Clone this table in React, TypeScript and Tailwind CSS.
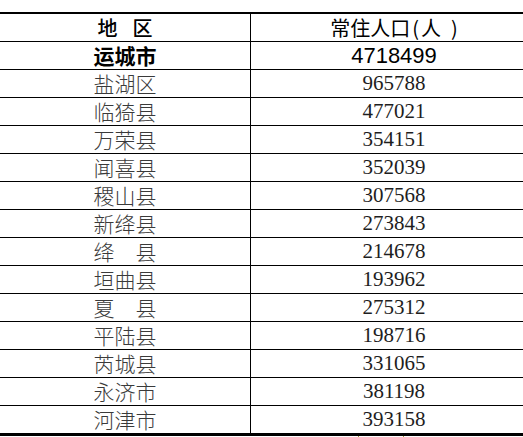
const rows: [string, string][] = [
  ['盐湖区', '965788'],
  ['临猗县', '477021'],
  ['万荣县', '354151'],
  ['闻喜县', '352039'],
  ['稷山县', '307568'],
  ['新绛县', '273843'],
  ['绛 县', '214678'],
  ['垣曲县', '193962'],
  ['夏 县', '275312'],
  ['平陆县', '198716'],
  ['芮城县', '331065'],
  ['永济市', '381198'],
  ['河津市', '393158'],
];

const cjk = "font-['Noto_Sans_CJK_SC',sans-serif]";

function Name({ text }: { text: string }) {
  // names with a space are spaced out to the width of three characters
  if (text.includes(' ')) {
    const [a, b] = text.split(' ');
    return (
      <span className="flex gap-[21px]">
        <span>{a}</span>
        <span>{b}</span>
      </span>
    );
  }
  return <span>{text}</span>;
}

export default function App() {
  return (
    <div className="w-[523px] h-[437px] overflow-hidden bg-white pt-[12px]">
      <div className="w-[537px] border-t-2 border-b-[3px] border-black">
        <div className="flex h-[28px] border-b border-black text-black">
          <div className={`w-[251px] border-r border-black flex items-center justify-center gap-[15px] text-[20px] font-medium ${cjk}`}>
            <span>地</span>
            <span>区</span>
          </div>
          <div className={`flex-1 flex items-center justify-center text-[20px] ${cjk}`}>
            <span>常住人口</span>
            <span className="ml-[2px]">(</span>
            <span className="ml-[2px]">人</span>
            <span className="ml-[10px]">)</span>
          </div>
        </div>
        <div className="flex h-[28px] border-b border-black text-black">
          <div className={`w-[251px] border-r border-black flex items-center justify-center text-[21px] font-semibold ${cjk}`}>
            运城市
          </div>
          <div className="flex-1 flex items-center justify-center text-[22px] font-['Liberation_Sans',Arial,sans-serif]">
            4718499
          </div>
        </div>
        {rows.map(([name, num], i) => (
          <div
            key={name}
            className={`flex ${i === rows.length - 1 ? 'h-[27px]' : 'h-[28px] border-b border-black'}`}
          >
            <div className={`w-[251px] border-r border-black flex items-center justify-center text-[21px] font-light text-[#3a3a3a] ${cjk}`}>
              <Name text={name} />
            </div>
            <div className="flex-1 flex items-center justify-center text-[21px] text-[#1e1e1e] font-['Liberation_Serif',serif]">
              {num}
            </div>
          </div>
        ))}
      </div>
      <div className="flex">
        <div className="ml-[358px] w-px h-[3px] bg-[#a89a3a]" />
        <div className="ml-[44px] w-px h-[3px] bg-[#a89a3a]" />
      </div>
    </div>
  );
}
